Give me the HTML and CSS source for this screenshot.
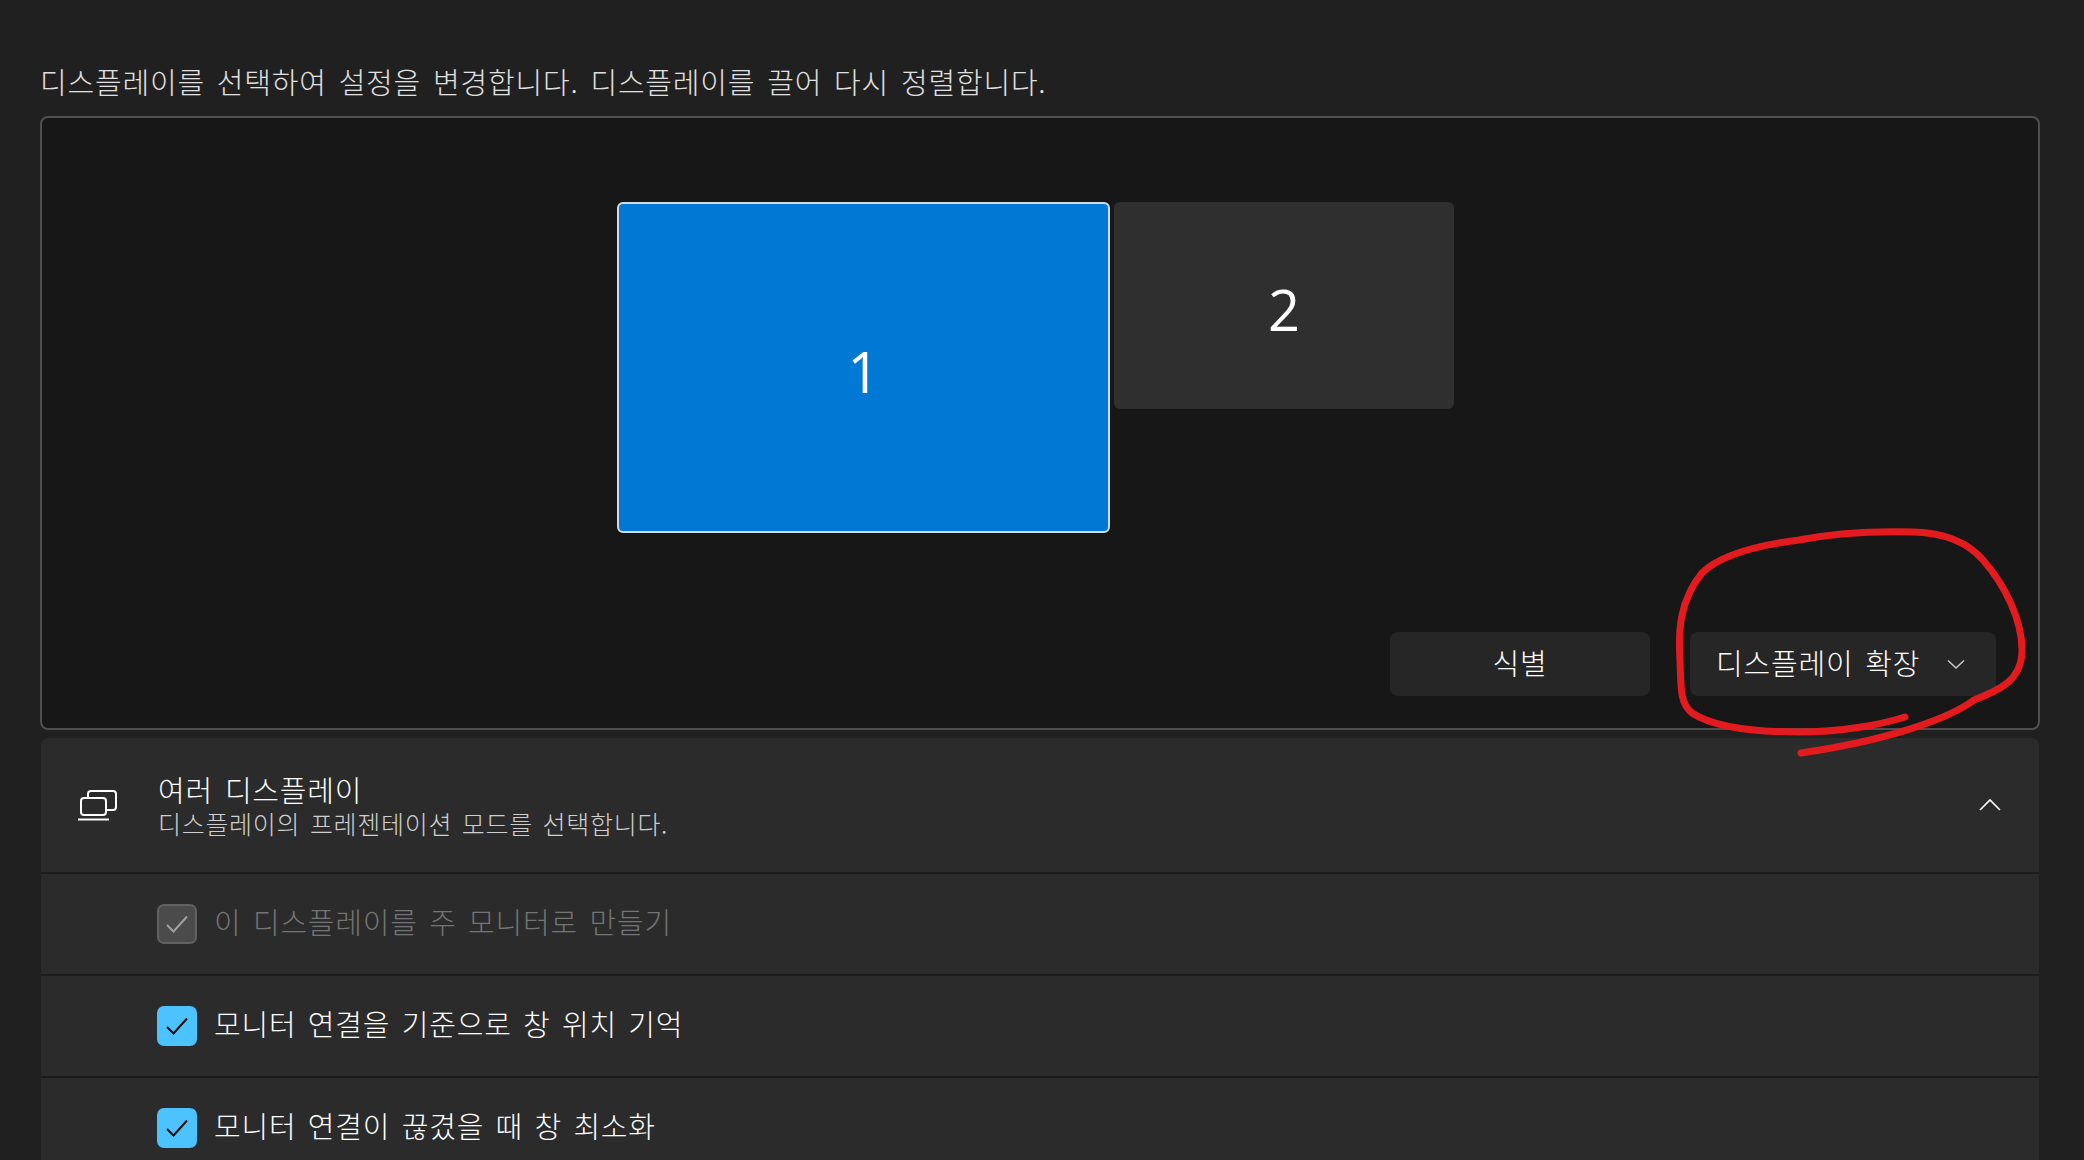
FILE: index.html
```html
<!DOCTYPE html>
<html lang="ko">
<head>
<meta charset="utf-8">
<title>디스플레이</title>
<link rel="stylesheet" href="styles.css">
</head>
<body>
<main class="page">
  <p class="intro">디스플레이를 선택하여 설정을 변경합니다. 디스플레이를 끌어 다시 정렬합니다.</p>
  <section class="canvas">
    <div class="monitor monitor-one"><span>1</span></div>
    <div class="monitor monitor-two"><span>2</span></div>
    <div class="canvas-actions">
      <button class="btn btn-identify"><span class="btn-label">식별</span></button>
      <button class="btn btn-mode"><span class="btn-label">디스플레이 확장</span>
        <svg class="chev-down" width="20" height="10" viewBox="0 0 20 10"><path d="M2 1.500l8 7.500 8-7.500" fill="none" stroke="#c8c8c8" stroke-width="1.500"/></svg>
      </button>
    </div>
  </section>
  <section class="panel">
    <header class="panel-head">
      <svg class="panel-icon" width="40" height="32" viewBox="0 0 40 32" fill="none" stroke="#fff" stroke-width="2">
        <path d="M10 9V5a3 3 0 0 1 3-3h22a3 3 0 0 1 3 3v13a3 3 0 0 1-3 3h-7"/>
        <rect x="3" y="9" width="25" height="17" rx="3"/>
        <path d="M0 30.500h31"/>
      </svg>
      <div class="panel-text">
        <div class="panel-title">여러 디스플레이</div>
        <div class="panel-sub">디스플레이의 프레젠테이션 모드를 선택합니다.</div>
      </div>
      <svg class="chev-up" width="24" height="14" viewBox="0 0 24 14"><path d="M2 12L12 2l10 10" fill="none" stroke="#fff" stroke-width="1.600"/></svg>
    </header>
    <div class="row row-disabled">
      <span class="check check-off"><svg width="24" height="24" viewBox="0 0 24 24"><path d="M2 13l6.500 6.500L22 4.500" fill="none" stroke="#a0a0a0" stroke-width="2"/></svg></span>
      <span class="row-label">이 디스플레이를 주 모니터로 만들기</span>
    </div>
    <div class="row">
      <span class="check check-on"><svg width="24" height="24" viewBox="0 0 24 24"><path d="M2 13l6.500 6.500L22 4.500" fill="none" stroke="#0b0b0b" stroke-width="2"/></svg></span>
      <span class="row-label">모니터 연결을 기준으로 창 위치 기억</span>
    </div>
    <div class="row">
      <span class="check check-on"><svg width="24" height="24" viewBox="0 0 24 24"><path d="M2 13l6.500 6.500L22 4.500" fill="none" stroke="#0b0b0b" stroke-width="2"/></svg></span>
      <span class="row-label">모니터 연결이 끊겼을 때 창 최소화</span>
    </div>
  </section>
</main>
<svg class="scribble" width="2084" height="1160" viewBox="0 0 2084 1160">
  <path d="M1905 717C1880 725 1840 732 1799 732C1760 732 1715 728 1692 713C1680 703 1681 690 1680 660C1678 630 1680 600 1702 573C1720 555 1760 545 1799 540C1840 532 1880 531 1914 532C1950 533 1970 545 1983 560C2005 585 2022 620 2022 650C2022 680 2000 690 1974 700C1950 718 1890 740 1801 753" fill="none" stroke="#e31b1f" stroke-width="7" stroke-linecap="round" stroke-linejoin="round"/>
</svg>
</body>
</html>
```
FILE: styles.css
```css
* { box-sizing: border-box; }
html, body { margin: 0; height: 100%; }
body {
  background: #202020;
  color: #fff;
  font-family: "Noto Sans CJK KR", "Noto Sans", sans-serif;
  overflow: hidden;
  position: relative;
}
.page { padding: 59px 44px 0 40px; height: 1160px; overflow: hidden; }
.intro {
  margin: 0 0 13px;
  font-size: 29px;
  letter-spacing: 0.8px;
  word-spacing: 3px;
  line-height: 44px;
  font-weight: 300;
  color: #e0e0e0;
  height: 44px;
}
.canvas {
  position: relative;
  height: 614px;
  background: #171717;
  border: 2px solid #4f4f4f;
  border-radius: 8px;
  display: flex;
  align-items: flex-end;
  justify-content: flex-end;
  padding: 0 42px 32px;
}
.monitor {
  position: absolute;
  display: flex;
  align-items: center;
  justify-content: center;
  font-family: "Open Sans", sans-serif;
  font-weight: 400;
  font-size: 56px;
  border-radius: 6px;
}
.monitor span { padding-top: 7px; }
.monitor-one {
  left: 575px; top: 84px; width: 493px; height: 331px;
  background: #0078d4;
  border: 2px solid #d2dbe3;
}
.monitor-two {
  left: 1072px; top: 84px; width: 340px; height: 207px;
  background: #2f2f2f;
}
.canvas-actions { display: flex; gap: 40px; }
.btn {
  height: 64px;
  background: #262626;
  border: 0;
  border-radius: 8px;
  color: #fff;
  font: 300 29px/1 "Noto Sans CJK KR", sans-serif;
  letter-spacing: 0.8px;
  word-spacing: 3px;
  display: flex;
  align-items: center;
}
.btn-label { margin-bottom: 4px; }
.btn-identify { width: 260px; justify-content: center; }
.btn-mode { width: 306px; padding: 0 26px; justify-content: space-between; }
.chev-down { margin-right: 4px; }
.panel {
  margin: 8px 1px 0;
  background: #2b2b2b;
  border-radius: 8px 8px 0 0;
}
.panel-head {
  height: 136px;
  display: flex;
  align-items: center;
  padding: 0 37px;
  border-bottom: 2px solid #1c1c1c;
}
.panel-icon { flex: none; margin-right: 40px; }
.panel-text { flex: 1; }
.panel-title { font-size: 29px; letter-spacing: 0.8px; word-spacing: 3px; line-height: 36px; font-weight: 300; }
.panel-sub { font-size: 25px; letter-spacing: 0.7px; word-spacing: 2px; line-height: 32px; font-weight: 300; color: #cfcfcf; }
.row {
  height: 102px;
  display: flex;
  align-items: center;
  gap: 17px;
  padding-left: 116px;
  font-size: 29px;
  letter-spacing: 0.8px;
  word-spacing: 2.500px;
  font-weight: 300;
  border-bottom: 2px solid #1c1c1c;
}
.row-label { margin-bottom: 6px; }
.row-disabled { color: #747474; }
.check {
  flex: none;
  width: 40px;
  height: 40px;
  border-radius: 7px;
  display: flex;
  align-items: center;
  justify-content: center;
}
.check-on { background: #4cc2ff; }
.check-off { background: #4b4b4b; border: 2px solid #616161; }
.scribble { position: absolute; left: 0; top: 0; pointer-events: none; }
```
